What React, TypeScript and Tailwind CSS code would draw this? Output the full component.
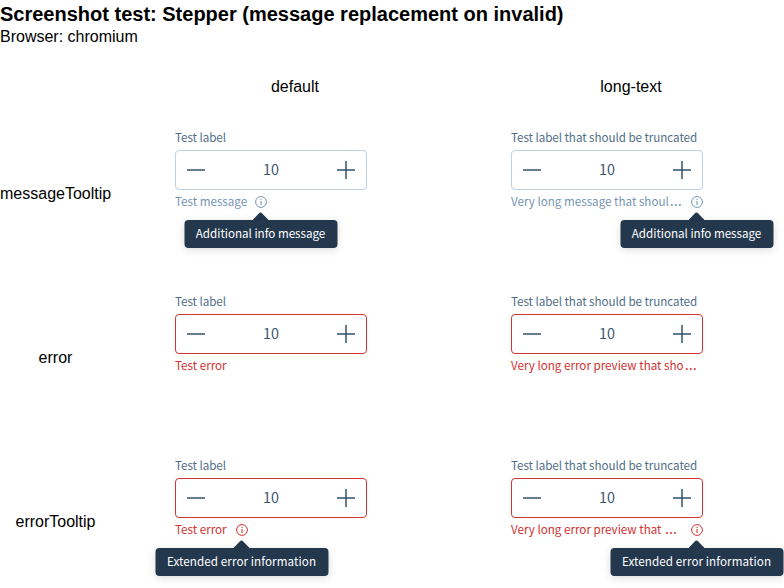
import React from "react";

type Tone = "info" | "error";

interface Variant {
  label: string;
  message: string;
  clipped?: boolean;
  tooltip?: string;
}

interface Row {
  name: string;
  tone: Tone;
  items: Variant[];
}

const shortLabel = "Test label";
const longLabel = "Test label that should be truncated";

const rows: Row[] = [
  {
    name: "messageTooltip",
    tone: "info",
    items: [
      { label: shortLabel, message: "Test message", tooltip: "Additional info message" },
      { label: longLabel, message: "Very long message that shoul", clipped: true, tooltip: "Additional info message" },
    ],
  },
  {
    name: "error",
    tone: "error",
    items: [
      { label: shortLabel, message: "Test error" },
      { label: longLabel, message: "Very long error preview that sho", clipped: true },
    ],
  },
  {
    name: "errorTooltip",
    tone: "error",
    items: [
      { label: shortLabel, message: "Test error", tooltip: "Extended error information" },
      { label: longLabel, message: "Very long error preview that ", clipped: true, tooltip: "Extended error information" },
    ],
  },
];

function InfoIcon() {
  return (
    <svg className="block size-3" viewBox="0 0 12 12" fill="none" stroke="currentColor">
      <circle cx="6" cy="6" r="5.4" strokeWidth="1" />
      <path d="M6 5v4" strokeWidth="1.1" />
      <path d="M6 3v1" strokeWidth="1.1" />
    </svg>
  );
}

function Tooltip({ text, tone }: { text: string; tone: Tone }) {
  return (
    <div className="absolute left-1/2 top-4 z-10 flex -translate-x-1/2 flex-col items-center text-white">
      <svg className="block h-2 w-4" viewBox="0 0 16 8">
        <path d="M0 8L7 0.8Q8 0 9 0.8L16 8Z" fill="#23374d" />
      </svg>
      <div
        className={`flex h-7 items-center justify-center whitespace-nowrap rounded bg-[#23374d] shadow-[0_2px_8px_rgba(0,0,0,0.14)] ${
          tone === "error" ? "w-[173px] tracking-[0.085px]" : "w-[153px] tracking-[-0.02px]"
        }`}
      >
        <span className="relative -top-px">{text}</span>
      </div>
    </div>
  );
}

function Stepper({ item, tone }: { item: Variant; tone: Tone }) {
  const border = tone === "error" ? "border-[#d13232]" : "border-[#bfd0de]";
  const color = tone === "error" ? "text-[#d13232]" : "text-[#7595b3]";
  const messageWidth = item.clipped ? "w-[179.5px]" : tone === "error" ? "w-[60.5px]" : "w-[79.5px]";
  return (
    <div className="w-48 font-['Noto_Sans_CJK_SC',sans-serif] text-[11.64px]">
      <div className="h-[22px] whitespace-nowrap leading-[18px] tracking-[-0.05px] text-[#516e87]">{item.label}</div>
      <div className={`flex h-10 items-center justify-between rounded border px-[11px] ${border}`}>
        <svg className="block h-[18px] w-[18px]" viewBox="0 0 18 18" stroke="#23475f" strokeOpacity="0.7" strokeWidth="2">
          <path d="M0 9h18" />
        </svg>
        <span className="relative -top-px text-[14.33px] leading-6 text-[#3b566e]">10</span>
        <svg className="block h-[18px] w-[18px]" viewBox="0 0 18 18" stroke="#23475f" strokeOpacity="0.7" strokeWidth="2">
          <path d="M0 9h18" />
          <path d="M9 0v18" />
        </svg>
      </div>
      <div className={`flex h-6 items-center ${color}`}>
        <span className={`whitespace-pre leading-[22px] -mt-[2px] ${item.tooltip ? messageWidth : ""}`}>
          {item.message}
          {item.clipped && (
            <span className="ml-px font-['Open_Sans'] text-[15.5px] leading-none">…</span>
          )}
        </span>
        {item.tooltip && (
          <span className="relative block size-3">
            <InfoIcon />
            <Tooltip text={item.tooltip} tone={tone} />
          </span>
        )}
      </div>
    </div>
  );
}

export default function App() {
  return (
    <main className="h-[588px] w-[784px] overflow-hidden bg-white font-['Liberation_Sans',Arial,sans-serif] text-base text-black">
      <h1 className="h-[27px] text-xl font-bold leading-[28px]">
        Screenshot test: Stepper (message replacement on invalid)
      </h1>
      <p className="h-[35px] leading-5">Browser: chromium</p>
      <div className="grid w-[799px] grid-cols-[127px_336px_336px] grid-rows-[50px_164px_164px_164px]">
        <div />
        <div className="text-center leading-[50px]">default</div>
        <div className="text-center leading-[50px]">long-text</div>
        {rows.map((row) => (
          <React.Fragment key={row.name}>
            <div className="w-[111px] text-center leading-[164px]">{row.name}</div>
            {row.items.map((item, i) => (
              <div key={i} className="pl-12 pt-4">
                <Stepper item={item} tone={row.tone} />
              </div>
            ))}
          </React.Fragment>
        ))}
      </div>
    </main>
  );
}
